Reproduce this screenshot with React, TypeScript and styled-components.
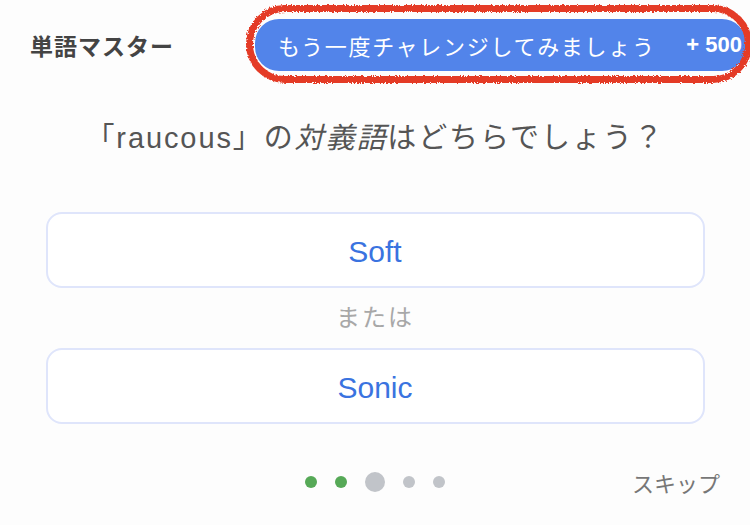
import React from "react";
import styled, { createGlobalStyle } from "styled-components";

const GlobalStyle = createGlobalStyle`
	html, body {
		margin: 0;
		padding: 0;
		background: #fdfdfd;
	}
	body {
		font-family: "Liberation Sans", "Noto Sans CJK JP", sans-serif;
	}
`;

const Page = styled.div`
	width: 750px;
	height: 525px;
	overflow: hidden;
	display: flex;
	flex-direction: column;
	align-items: center;
`;

const Header = styled.header`
	align-self: stretch;
	display: flex;
	align-items: center;
	justify-content: space-between;
	padding: 19px 4px 0 30px;
`;

const Title = styled.h1`
	margin: 0;
	font-size: 23px;
	font-weight: 700;
	color: #444;
	letter-spacing: 1px;
`;

const ChallengePill = styled.button`
	position: relative;
	display: flex;
	align-items: center;
	width: 491px;
	height: 52px;
	padding: 0 4px 0 23px;
	border: none;
	border-radius: 24px;
	background: #5284ea;
	color: #fff;
	font-family: inherit;
	font-size: 22px;

	/* hand-drawn annotation ring */
	&::after {
		content: "";
		position: absolute;
		top: -14px;
		bottom: -12px;
		left: -9px;
		right: -6px;
		border: 7px solid #e43a25;
		border-radius: 40px;
		filter: url(#rough-edge);
	}
`;

const PillLabel = styled.span`
	letter-spacing: 1.7px;
`;

const Points = styled.span`
	font-weight: 700;
	margin-left: auto;
`;

const Question = styled.p`
	margin: 43px 0 0;
	font-size: 29px;
	color: #555;
	letter-spacing: 1.9px;

	& em {
		font-style: italic;
	}
`;

const Choices = styled.div`
	display: flex;
	flex-direction: column;
	align-items: center;
	gap: 12px;
	margin-top: 56px;
`;

const Choice = styled.button`
	width: 659px;
	height: 76px;
	padding-top: 5px;
	border: 2px solid #dfe5fb;
	border-radius: 16px;
	background: #fff;
	color: #3a73e0;
	font-family: inherit;
	font-size: 30px;
`;

const Or = styled.span`
	font-size: 24px;
	color: #a8a8a8;
	letter-spacing: 2px;
	line-height: 36px;
`;

const Footer = styled.footer`
	align-self: stretch;
	display: grid;
	grid-template-columns: 1fr auto 1fr;
	align-items: center;
	margin-top: 42px;
	padding: 0 30px;
`;

const Dots = styled.div`
	grid-column: 2;
	display: flex;
	align-items: center;
	gap: 18px;
`;

const Dot = styled.span<{ $state: "done" | "current" | "todo" }>`
	width: ${(p) => (p.$state === "current" ? 20 : 12)}px;
	height: ${(p) => (p.$state === "current" ? 20 : 12)}px;
	border-radius: 50%;
	background: ${(p) => (p.$state === "done" ? "#56a957" : "#c1c4c9")};
`;

const Skip = styled.button`
	justify-self: end;
	border: none;
	background: none;
	padding: 0;
	font-family: inherit;
	font-size: 22px;
	color: #777;
`;

const HiddenDefs = styled.svg`
	position: absolute;
	width: 0;
	height: 0;
`;

const steps: ("done" | "current" | "todo")[] = ["done", "done", "current", "todo", "todo"];

const App: React.FC = () => {
	return (
		<Page>
			<GlobalStyle />
			<HiddenDefs aria-hidden="true">
				<filter id="rough-edge">
					<feTurbulence type="fractalNoise" baseFrequency="0.6" numOctaves="2" seed="3" />
					<feDisplacementMap in="SourceGraphic" scale="4" />
				</filter>
			</HiddenDefs>
			<Header>
				<Title>単語マスター</Title>
				<ChallengePill>
					<PillLabel>もう一度チャレンジしてみましょう</PillLabel>
					<Points>+ 500</Points>
				</ChallengePill>
			</Header>

			<Question>
				「raucous」の<em>対義語</em>はどちらでしょう？
			</Question>

			<Choices>
				<Choice>Soft</Choice>
				<Or>または</Or>
				<Choice>Sonic</Choice>
			</Choices>

			<Footer>
				<Dots>
					{steps.map((s, i) => (
						<Dot key={i} $state={s} />
					))}
				</Dots>
				<Skip>スキップ</Skip>
			</Footer>
		</Page>
	);
};

export default App;
